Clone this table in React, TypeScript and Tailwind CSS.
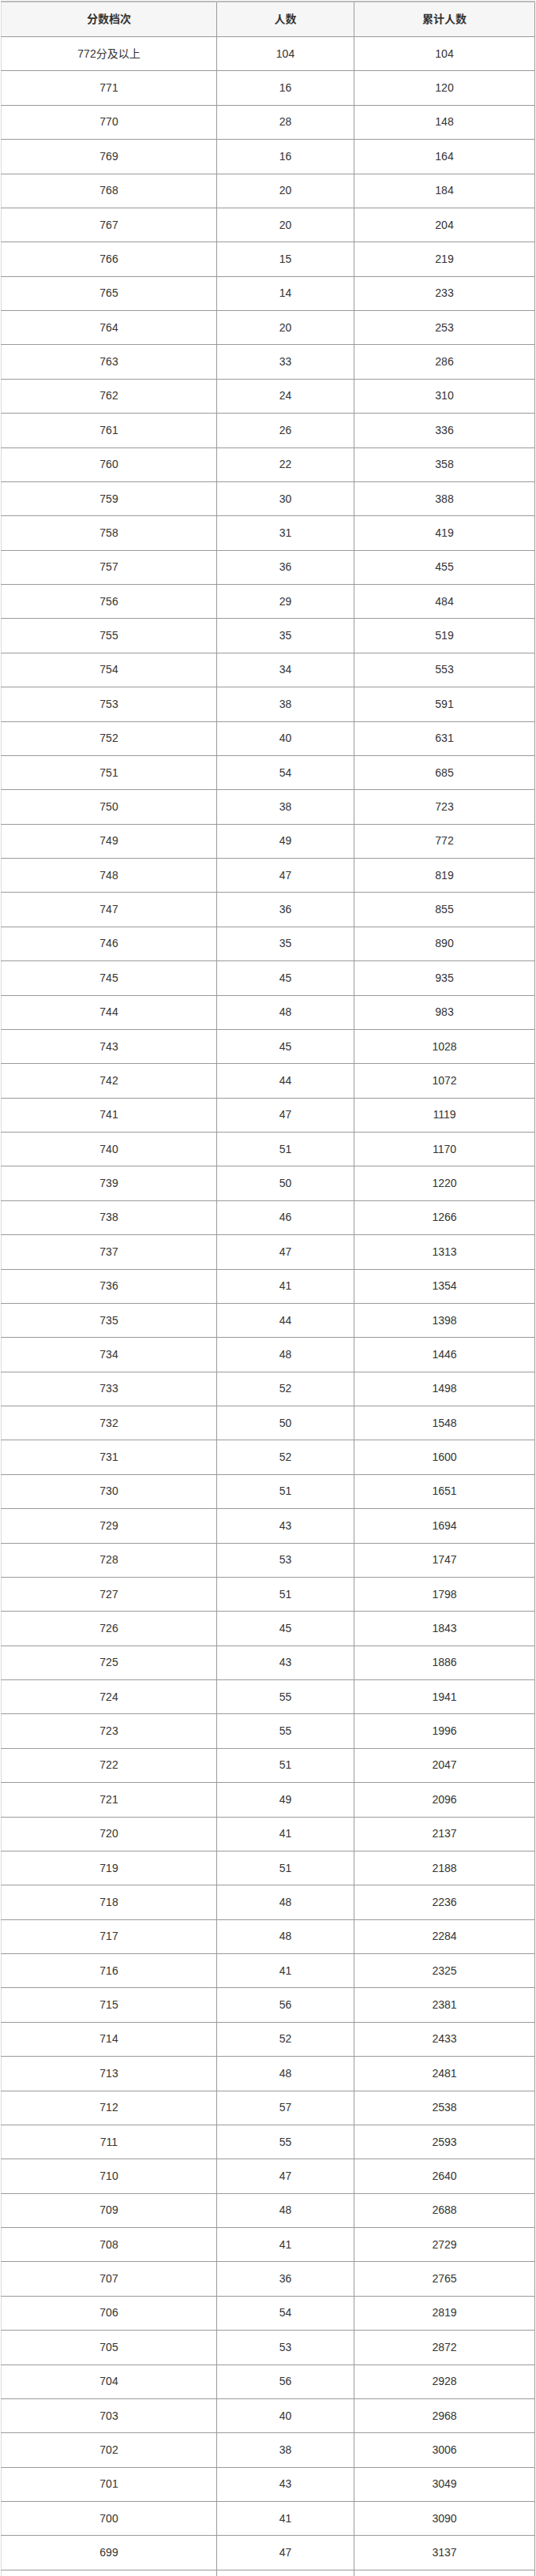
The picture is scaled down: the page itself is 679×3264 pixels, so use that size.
import React from "react";

const rows: [string, string, string][] = [
  ["772分及以上", "104", "104"],
  ["771", "16", "120"],
  ["770", "28", "148"],
  ["769", "16", "164"],
  ["768", "20", "184"],
  ["767", "20", "204"],
  ["766", "15", "219"],
  ["765", "14", "233"],
  ["764", "20", "253"],
  ["763", "33", "286"],
  ["762", "24", "310"],
  ["761", "26", "336"],
  ["760", "22", "358"],
  ["759", "30", "388"],
  ["758", "31", "419"],
  ["757", "36", "455"],
  ["756", "29", "484"],
  ["755", "35", "519"],
  ["754", "34", "553"],
  ["753", "38", "591"],
  ["752", "40", "631"],
  ["751", "54", "685"],
  ["750", "38", "723"],
  ["749", "49", "772"],
  ["748", "47", "819"],
  ["747", "36", "855"],
  ["746", "35", "890"],
  ["745", "45", "935"],
  ["744", "48", "983"],
  ["743", "45", "1028"],
  ["742", "44", "1072"],
  ["741", "47", "1119"],
  ["740", "51", "1170"],
  ["739", "50", "1220"],
  ["738", "46", "1266"],
  ["737", "47", "1313"],
  ["736", "41", "1354"],
  ["735", "44", "1398"],
  ["734", "48", "1446"],
  ["733", "52", "1498"],
  ["732", "50", "1548"],
  ["731", "52", "1600"],
  ["730", "51", "1651"],
  ["729", "43", "1694"],
  ["728", "53", "1747"],
  ["727", "51", "1798"],
  ["726", "45", "1843"],
  ["725", "43", "1886"],
  ["724", "55", "1941"],
  ["723", "55", "1996"],
  ["722", "51", "2047"],
  ["721", "49", "2096"],
  ["720", "41", "2137"],
  ["719", "51", "2188"],
  ["718", "48", "2236"],
  ["717", "48", "2284"],
  ["716", "41", "2325"],
  ["715", "56", "2381"],
  ["714", "52", "2433"],
  ["713", "48", "2481"],
  ["712", "57", "2538"],
  ["711", "55", "2593"],
  ["710", "47", "2640"],
  ["709", "48", "2688"],
  ["708", "41", "2729"],
  ["707", "36", "2765"],
  ["706", "54", "2819"],
  ["705", "53", "2872"],
  ["704", "56", "2928"],
  ["703", "40", "2968"],
  ["702", "38", "3006"],
  ["701", "43", "3049"],
  ["700", "41", "3090"],
  ["699", "47", "3137"],
  ["", "", ""],
];

const grid = "grid grid-cols-[274px_174px_229px] border-b border-[#9a9a9a]";
const c1 = "flex items-center justify-center border-l border-l-[#dcdcdc] border-r border-r-[#9a9a9a]";
const c = "flex items-center justify-center border-r border-r-[#9a9a9a]";

export default function App() {
  return (
    <div
      className="w-[679px] bg-white pt-px pl-px text-[14px] text-[#333]"
      style={{ fontFamily: '"Liberation Sans", "Noto Sans CJK SC", Arial, sans-serif' }}
    >
      <div className="w-[677px]">
        <div className={`${grid} h-[46px] border-t-2 border-t-[#bbbbbb] bg-[#f6f6f6] font-bold`}>
          <div className={c1}>分数档次</div>
          <div className={c}>人数</div>
          <div className={c}>累计人数</div>
        </div>
        {rows.map((r, i) => (
          <div key={i} className={`${grid} h-[43.39px]`}>
            <div className={c1}>{r[0]}</div>
            <div className={c}>{r[1]}</div>
            <div className={c}>{r[2]}</div>
          </div>
        ))}
      </div>
    </div>
  );
}
